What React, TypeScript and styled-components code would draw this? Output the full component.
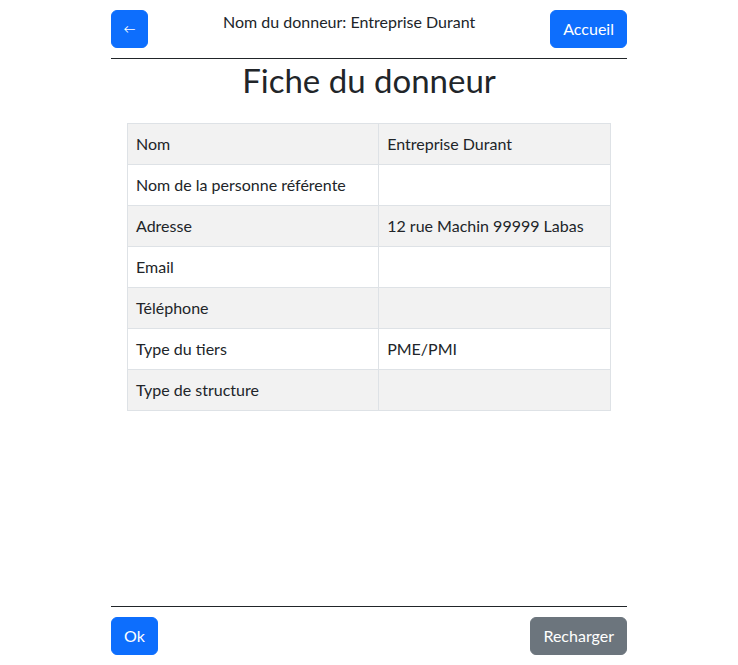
import React from "react";
import styled, { createGlobalStyle } from "styled-components";

const Global = createGlobalStyle`
  html, body { margin: 0; padding: 0; }
  body {
    font-family: "Lato", "Noto Sans", sans-serif;
    font-size: 16px;
    line-height: 1.5;
    color: #212529;
    background: #fff;
  }
  * { box-sizing: border-box; }
`;

const Page = styled.div`
  min-height: 100vh;
  display: flex;
  flex-direction: column;
  width: 516px;
  margin: 0 auto;
`;

const Header = styled.header`
  display: flex;
  justify-content: space-between;
  align-items: flex-start;
  padding-top: 10px;
`;

const HeaderTitle = styled.div`
  flex: 1;
  text-align: center;
  font-size: 16px;
  line-height: 24px;
`;

const Button = styled.button<{ $variant?: "primary" | "secondary" }>`
  font-family: inherit;
  font-size: 16px;
  line-height: 24px;
  padding: 6px 12px;
  border-radius: 6px;
  border: 1px solid ${(p) => (p.$variant === "secondary" ? "#6c757d" : "#0d6efd")};
  background: ${(p) => (p.$variant === "secondary" ? "#6c757d" : "#0d6efd")};
  color: #fff;
  cursor: pointer;
`;

const BackButton = styled(Button)`
  width: 37px;
  padding: 6px 0;
  font-size: 12px;
`;

const Rule = styled.hr`
  border: 0;
  border-top: 1px solid #212529;
  margin: 10px 0 0;
  width: 100%;
`;

const Main = styled.main`
  flex: 1;
  padding: 0 16px;
`;

const Title = styled.h1`
  margin: 1px 0 23px;
  font-weight: 400;
  font-size: 33px;
  line-height: 40px;
  text-align: center;
`;

const Table = styled.table`
  width: 100%;
  border-collapse: collapse;
  border: 1px solid #dee2e6;
`;

const Row = styled.tr<{ $striped: boolean }>`
  background: ${(p) => (p.$striped ? "#f2f2f2" : "#fff")};
`;

const Cell = styled.td`
  border: 1px solid #dee2e6;
  padding: 8px;
  line-height: 24px;
  vertical-align: top;
`;

const Footer = styled.footer`
  display: flex;
  flex-direction: column;
  padding-bottom: 10px;
`;

const FooterButtons = styled.div`
  display: flex;
  justify-content: space-between;
  margin-top: 10px;
`;

const rows: [string, string][] = [
  ["Nom", "Entreprise Durant"],
  ["Nom de la personne référente", ""],
  ["Adresse", "12 rue Machin 99999 Labas"],
  ["Email", ""],
  ["Téléphone", ""],
  ["Type du tiers", "PME/PMI"],
  ["Type de structure", ""],
];

export default function App() {
  return (
    <>
      <Global />
      <Page>
        <Header>
          <BackButton>←</BackButton>
          <HeaderTitle>Nom du donneur: Entreprise Durant</HeaderTitle>
          <Button>Accueil</Button>
        </Header>
        <Rule />
        <Main>
          <Title>Fiche du donneur</Title>
          <Table>
            <tbody>
              {rows.map(([k, v], i) => (
                <Row key={k} $striped={i % 2 === 0}>
                  <Cell style={{ width: "52%" }}>{k}</Cell>
                  <Cell>{v}</Cell>
                </Row>
              ))}
            </tbody>
          </Table>
        </Main>
        <Footer>
          <Rule />
          <FooterButtons>
            <Button>Ok</Button>
            <Button $variant="secondary">Recharger</Button>
          </FooterButtons>
        </Footer>
      </Page>
    </>
  );
}
